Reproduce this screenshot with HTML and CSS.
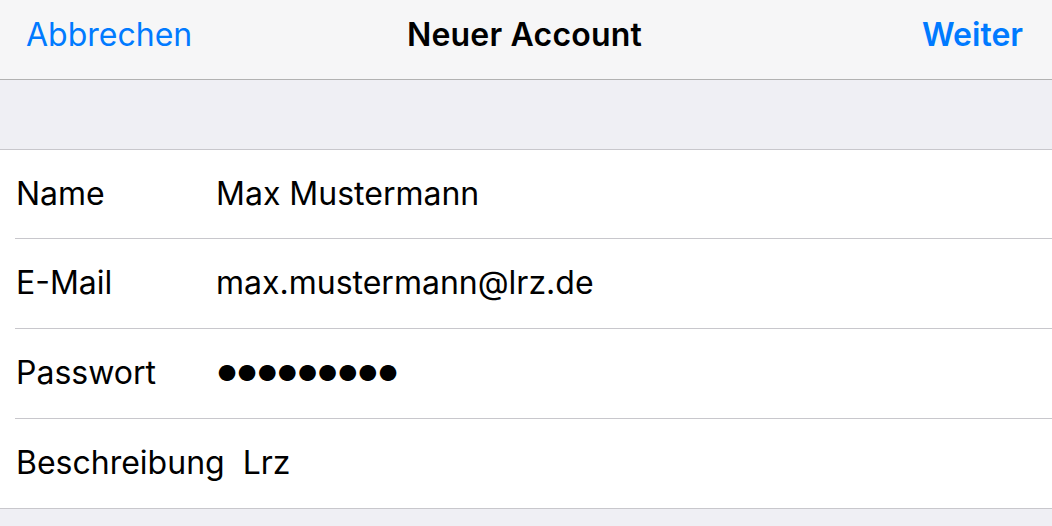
FILE: index.html
```html
<!DOCTYPE html>
<html lang="de">
<head>
<meta charset="utf-8">
<title>Neuer Account</title>
<link rel="stylesheet" href="styles.css">
</head>
<body>
<div class="screen">
  <header class="navbar">
    <span class="nav-btn nav-left">Abbrechen</span>
    <span class="nav-title">Neuer Account</span>
    <span class="nav-btn nav-right">Weiter</span>
  </header>
  <div class="spacer"></div>
  <section class="group">
    <div class="row"><span class="label">Name</span><span class="value">Max Mustermann</span></div>
    <div class="row"><span class="label">E-Mail</span><span class="value">max.mustermann@lrz.de</span></div>
    <div class="row"><span class="label">Passwort</span><span class="value dots">●●●●●●●●●</span></div>
    <div class="row"><span class="label">Beschreibung</span><span class="value">Lrz</span></div>
  </section>
  <div class="footer"></div>
</div>
</body>
</html>
```
FILE: styles.css
```css
* { box-sizing: border-box; margin: 0; padding: 0; }
html, body { width: 1052px; height: 526px; overflow: hidden; }
body {
  font-family: "Inter", "Liberation Sans", sans-serif;
  background: #efeff4;
  color: #000;
}
.screen { display: flex; flex-direction: column; height: 526px; }
.navbar {
  height: 80px;
  background: #f6f6f7;
  border-bottom: 1px solid #b2b2b2;
  display: grid;
  grid-template-columns: 1fr auto 1fr;
  align-items: center;
  padding: 0 29px 10px 26px;
  font-size: 32px;
}
.nav-btn { color: #007aff; }
.nav-left { justify-self: start; }
.nav-right { justify-self: end; font-weight: 600; }
.nav-title { font-weight: 600; letter-spacing: 0.2px; }
.spacer { height: 70px; background: #efeff4; border-bottom: 1px solid #c8c7cc; }
.group { background: #fff; border-bottom: 1px solid #c8c7cc; }
.row {
  height: 90px;
  margin-left: 15px;
  padding-left: 1px;
  padding-bottom: 2px;
  display: flex;
  align-items: center;
  font-size: 32px;
  border-bottom: 1px solid #c8c7cc;
}
.row:first-child { height: 89px; }
.row:last-child { border-bottom: none; height: 89px; }
.label { min-width: 182px; margin-right: 18px; }
.dots { font-size: 22px; letter-spacing: 0; padding-left: 1px; }
.footer { flex: 1; background: #efeff4; }
```
